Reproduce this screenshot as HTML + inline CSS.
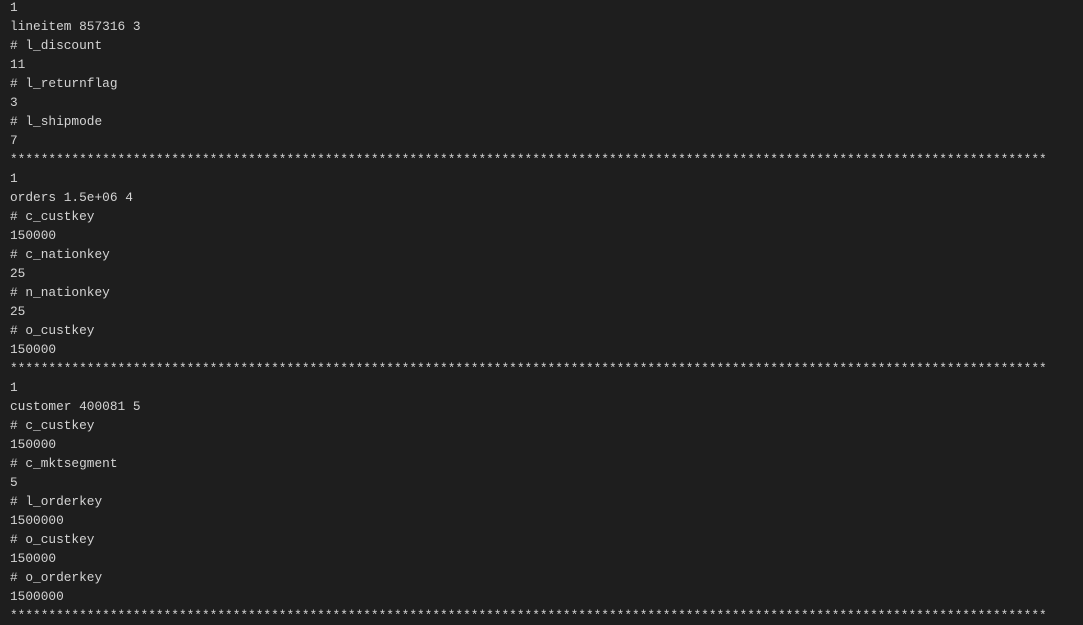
<!DOCTYPE html>
<html><head><meta charset="utf-8"><style>
html,body{margin:0;background:#1e1e1e;width:1083px;height:622px;overflow:hidden}
pre{margin:0;position:absolute;left:10px;top:-2px;font-family:"Liberation Mono",monospace;font-size:12.8px;line-height:19px;color:#d4d4d4;white-space:pre}
</style></head><body><pre>1
lineitem 857316 3
# l_discount
11
# l_returnflag
3
# l_shipmode
7
***************************************************************************************************************************************
1
orders 1.5e+06 4
# c_custkey
150000
# c_nationkey
25
# n_nationkey
25
# o_custkey
150000
***************************************************************************************************************************************
1
customer 400081 5
# c_custkey
150000
# c_mktsegment
5
# l_orderkey
1500000
# o_custkey
150000
# o_orderkey
1500000
***************************************************************************************************************************************</pre></body></html>
